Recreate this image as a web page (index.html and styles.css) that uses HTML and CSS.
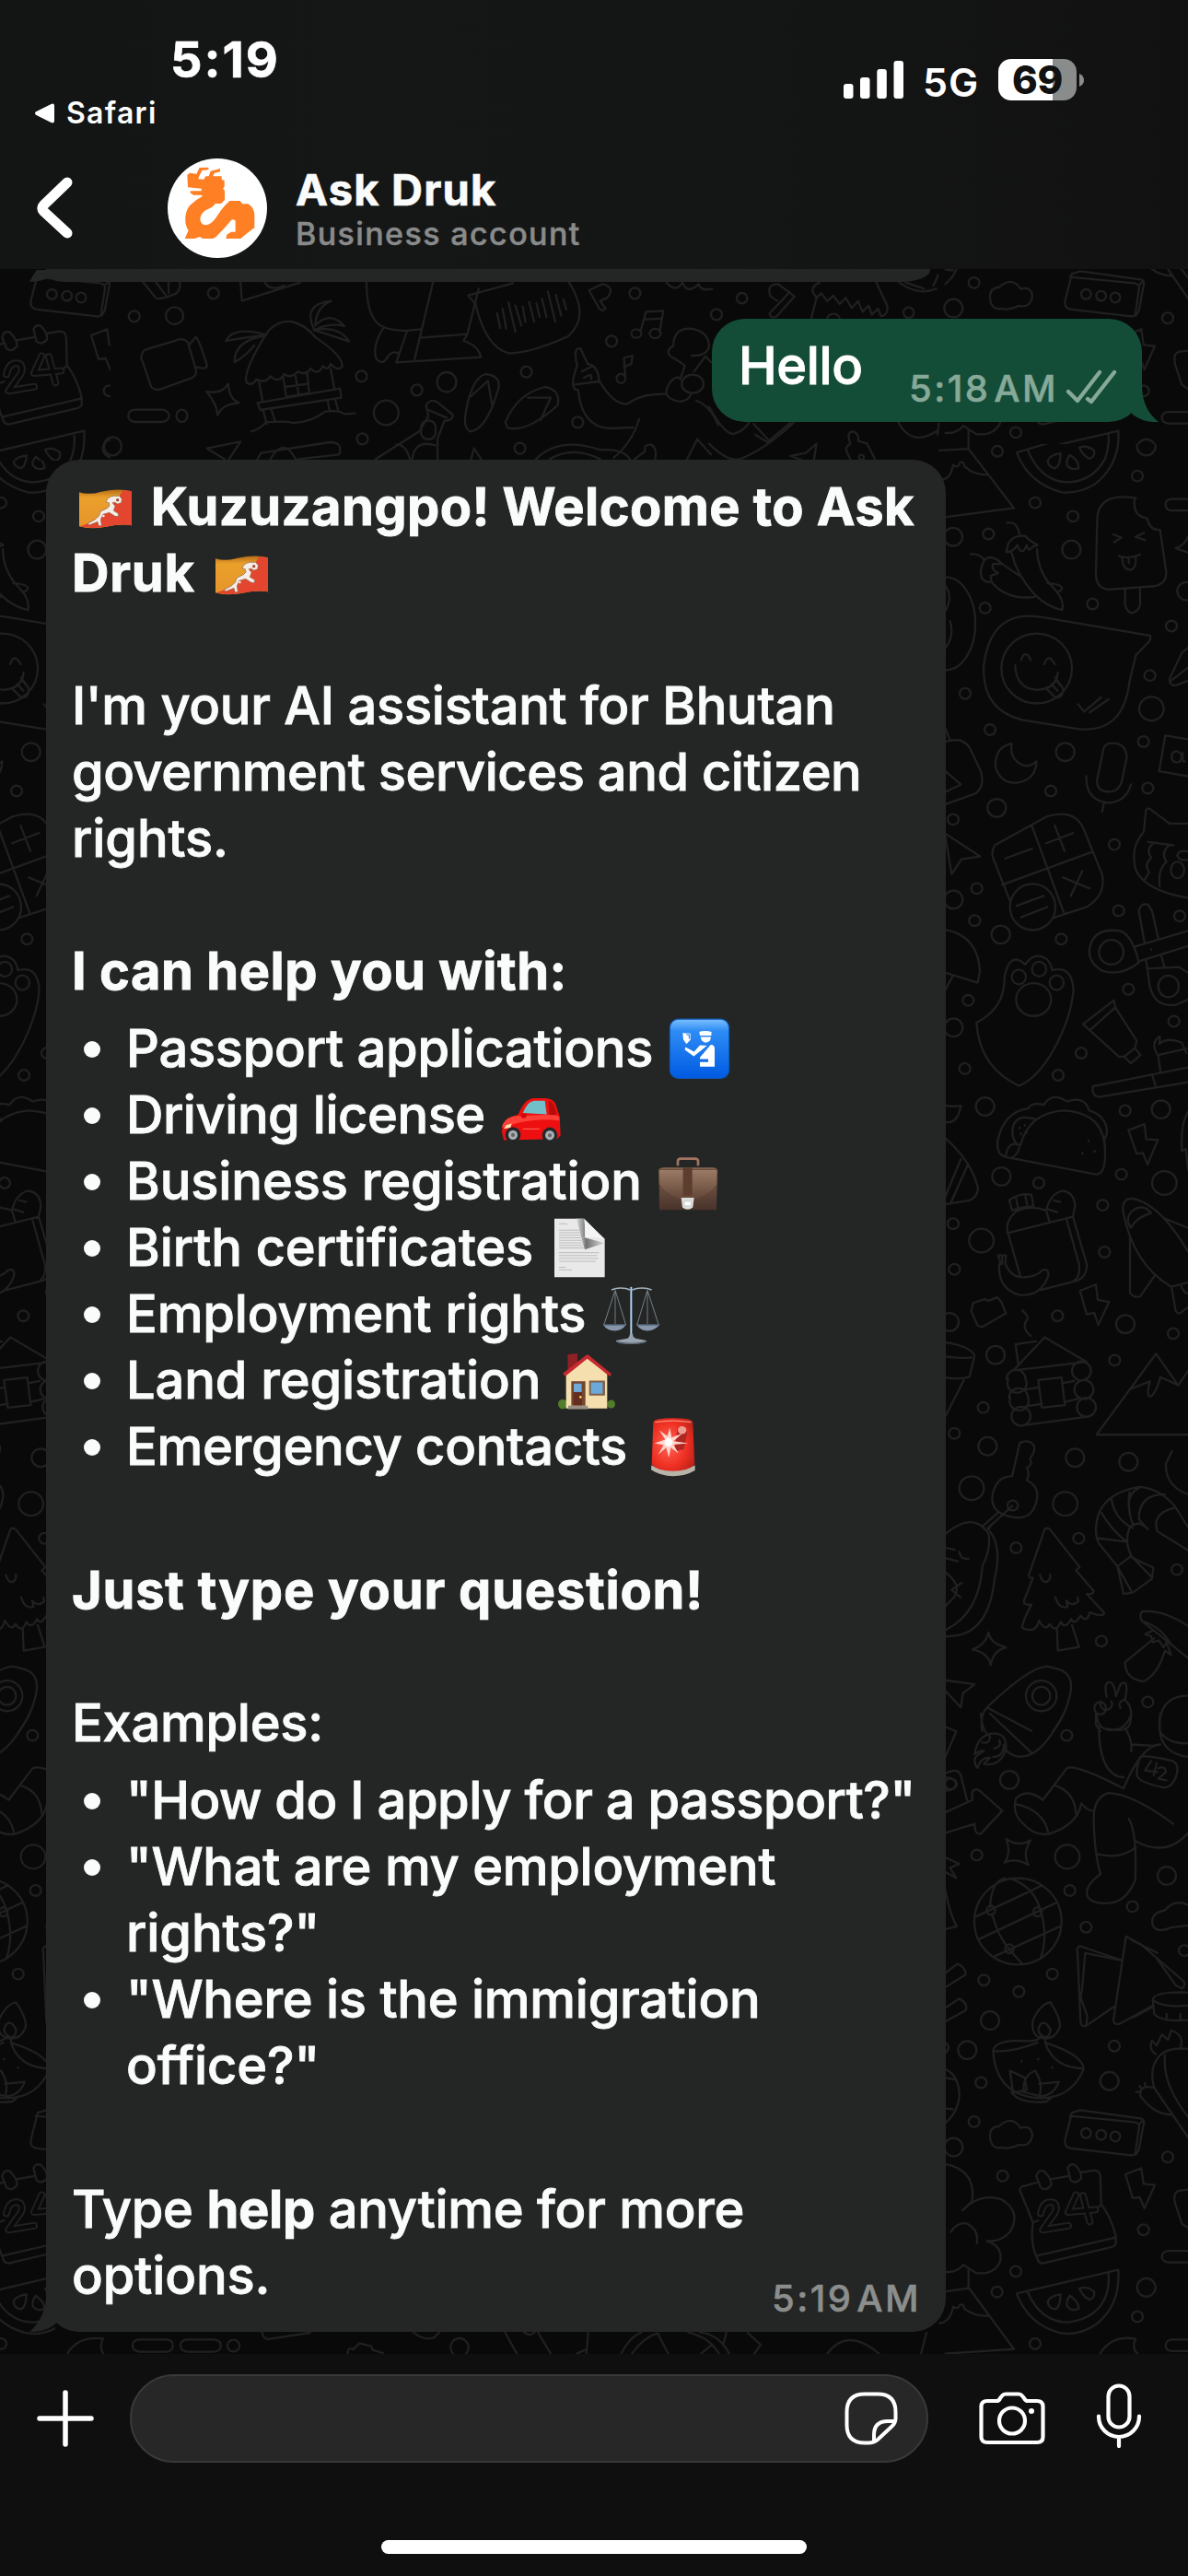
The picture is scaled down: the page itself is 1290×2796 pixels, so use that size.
FILE: index.html
```html
<!DOCTYPE html>
<html lang="en">
<head>
<meta charset="utf-8">
<title>Ask Druk</title>
<link rel="stylesheet" href="styles.css">
</head>
<body>
<div class="screen">
  <header class="header">
    <div class="status">
      <div class="status-left">
        <div class="clock">5:19</div>
        <div class="return-app">
          <svg width="23" height="22" viewBox="0 0 23 22"><path d="M2 9.300Q0 11 2 12.700L18.500 21Q22 22.500 22 19V3Q22-.5 18.500 1Z" fill="#fff"/></svg>
          <span>Safari</span>
        </div>
      </div>
      <div class="status-right">
        <svg width="65" height="41" viewBox="0 0 65 41" fill="#fff"><rect y="25" width="10.500" height="16" rx="3"/><rect x="18" y="18" width="10.500" height="23" rx="3"/><rect x="36.300" y="9" width="10.500" height="32" rx="3"/><rect x="54.500" width="10.500" height="41" rx="3"/></svg>
        <span class="network">5G</span>
        <div class="battery"><span class="battery-level">69</span></div>
        <svg class="battery-cap" width="5" height="14" viewBox="0 0 5 14"><path d="M0 0Q5 2 5 7T0 14Z" fill="#8a8b8b"/></svg>
      </div>
    </div>
    <div class="contact">
      <svg class="back" width="44" height="72" viewBox="0 0 44 72"><path d="M36 8L10.500 32.500Q7 36 10.500 39.500L36 63" fill="none" stroke="#fff" stroke-width="11" stroke-linecap="round" stroke-linejoin="round"/></svg>
      <svg class="avatar" width="108" height="108" viewBox="66 36 324 324"><circle cx="228" cy="198" r="162" fill="#fff"/><path d="M130 90L138 83L160 86L170 66L199 65V73L178 75L168 96L166 103L184 104L190 94H200L206 77L237 69V79L218 84L214 94H242V104L251 108V128L246 134L252 140V171L240 183H222L211 194L190 205Q174 215 172 233Q174 252 192 253Q208 250 222 231L240 205Q252 188 268 174H302L309 184H328Q348 196 349 220V262L329 276L304 297H256L259 284L273 275H287V240Q284 232 274 236L252 262L224 291L214 297H180L171 291L154 297H122L134 270Q122 254 124 226Q126 204 139 188L161 170L178 160V155H150L140 148V142H176V134L132 130Z" fill="#ff7f24"/></svg>
      <div class="contact-text">
        <div class="contact-name">Ask Druk</div>
        <div class="contact-kind">Business account</div>
      </div>
    </div>
  </header>

  <main class="chat">
    <svg class="wallpaper" width="1290" height="2263" viewBox="0 292 1290 2263">
      <defs>
        <ellipse id="s" rx="18" ry="13"/><ellipse id="m" rx="30" ry="22"/><ellipse id="l" rx="40" ry="29"/>
        <g id="tile">
          <g transform="translate(1020 480) scale(.33333 .44643)">
            <path d="M252 25L553 -42Q583 -30 583 0Q575 60 510 100Q460 125 400 122Q290 100 252 25M287 17Q330 97 420 97Q500 95 540 40Q556 10 548 -38M395 27Q360 30 353 45Q355 60 376 63Q394 60 395 27M425 31Q412 45 416 56Q430 70 454 63Q455 45 425 31M456 13Q480 6 504 20Q508 35 490 40Q470 35 456 13M0 20L95 16L243 160L0 184M0 90Q35 95 45 55Q60 65 67 50Q80 45 82 58Q110 80 158 79M95 16V-5"/>
            <path d="M220 196Q255 190 262 228M218 267L225 246Q240 225 280 228Q290 238 320 250L304 254Q290 270 284 250Q270 280 254 250Q240 268 218 267M236 270Q250 320 310 370Q350 400 400 408Q410 380 360 345Q320 310 318 260M102 272Q130 270 147 286Q130 310 137 328Q150 345 170 338L167 325L192 318Q168 310 174 296L205 296Q170 270 147 286M168 338Q220 385 310 376M205 296L262 325M352 343Q400 345 400 356Q390 368 378 361"/>
            <path d="M640 136Q510 120 514 196L510 320Q510 355 550 358L700 350Q740 345 739 315L719 213Q685 216 677 185Q630 180 636 140M567 224L593 232L569 243M667 220L639 230L670 238M585 277Q620 285 654 273M595 280Q598 312 625 310Q642 305 640 280M617 284V294M605 358V395Q612 415 630 415Q650 410 654 395V354M810 138H755Q735 140 737 154Q740 165 755 166H810M810 230Q800 250 770 258L810 268"/>
            <path d="M686 470L330 425Q170 405 145 540Q135 650 270 675L450 697Q600 710 620 580L640 518L684 484Q690 475 686 470M202 550A115 85 0 1 0 432 550A115 85 0 1 0 202 550M266 530Q280 500 298 530M342 540Q355 510 376 540M247 542Q250 600 320 602Q380 600 386 560M350 600L380 622Q405 620 402 598L378 572M365 588L385 604M380 578L400 595M452 637L472 655L527 620M490 657L551 625"/>
            <path d="M20 328A95 110 0 0 1 20 554M20 350Q45 375 20 410M35 435Q50 470 20 500M810 500L790 512L750 575Q748 595 775 590L810 580M755 580L810 548M236 733Q180 740 183 790Q200 830 250 828Q315 822 316 776Q280 800 245 770Q230 755 236 733M535 745L514 820Q510 850 555 850Q590 848 597 815L611 765Q605 732 570 732Q540 730 535 745M479 812Q475 870 550 877Q610 873 624 832M536 878L530 898M810 722L736 713L716 800L810 812M793 765Q775 742 757 758Q755 785 785 776L793 755Q790 780 800 776"/>
            <path d="M20 728Q80 715 100 745L135 800Q150 840 115 855L20 880M20 800L70 832L20 850M20 695L35 725M20 952L133 1007L72 1014L40 1050L20 960M180 980L350 910Q440 890 470 940L530 1050Q545 1100 480 1130L372 1156M180 980Q165 1000 180 1020L230 1115M300 930L405 1143M205 1076L498 996M215 1012L302 988M348 975L436 950M376 932L408 994M403 1058L490 1085M466 1042L428 1103M230 1130A74 56 0 1 0 378 1130A74 56 0 1 0 230 1130M252 1127L340 1103M266 1155L352 1130M666 947Q620 985 640 1040Q670 1090 810 1108M666 947L673 895Q680 885 692 895L750 927H810M680 972L762 980M700 973Q670 990 690 1010Q665 1030 684 1045L670 1062M748 980Q720 1000 740 1020Q710 1040 718 1080M754 1040A22 20 0 1 0 798 1040A22 20 0 1 0 754 1040M810 995Q780 990 775 1005Q785 1020 810 1015"/>
            <path d="M20 1185Q125 1200 132 1285L125 1314L20 1290M45 1296L20 1330M650 1265Q590 1300 530 1285Q475 1260 493 1220Q510 1180 590 1188Q630 1200 650 1265M520 1240A40 30 0 1 0 600 1240A40 30 0 1 0 520 1240M637 1226L810 1188M650 1262L810 1225M668 1215L650 1140Q655 1120 680 1124L693 1140L713 1206M673 1258L685 1320Q700 1375 770 1368L810 1355M678 1280L780 1276L810 1290M723 1248L733 1275M713 1323A33 26 0 1 0 780 1323A33 26 0 1 0 713 1323M690 1233V1234"/>
            <path d="M121 1411Q215 1375 212 1300Q230 1235 280 1270Q310 1235 352 1258Q365 1270 367 1284Q430 1270 437 1330Q430 1400 370 1480Q320 1545 260 1565Q130 1520 121 1411M250 1355A57 40 0 1 0 364 1355A57 40 0 1 0 250 1355M236 1300A23 18 0 1 0 282 1300A23 18 0 1 0 236 1300M302 1281A23 18 0 1 0 348 1281A23 18 0 1 0 302 1281M359 1314A23 18 0 1 0 405 1314A23 18 0 1 0 359 1314M468 1415L568 1357L573 1374L643 1455L637 1473L655 1490L624 1510L602 1494H585ZM490 1430L573 1374M602 1494L637 1473M500 1566L810 1520M713 1492L720 1528M713 1492Q685 1460 718 1445Q720 1455 716 1463Q745 1445 790 1460L805 1485M713 1490L805 1474M694 1540L705 1566"/>
            <use href="#s" x="189" y="22"/><use href="#s" x="645" y="82"/><use href="#s" x="312" y="147"/><use href="#s" x="435" y="180"/><use href="#s" x="160" y="223"/><use href="#m" x="45" y="230"/><use href="#m" x="430" y="261"/><use href="#m" x="674" y="10"/><use href="#s" x="149" y="403"/><use href="#s" x="499" y="393"/><use href="#s" x="756" y="447"/><use href="#m" x="805" y="362"/><use href="#s" x="686" y="567"/><use href="#l" x="691" y="648"/><use href="#s" x="84" y="611"/><use href="#s" x="165" y="699"/><use href="#s" x="665" y="728"/><use href="#m" x="410" y="753"/><use href="#s" x="363" y="848"/><use href="#s" x="679" y="841"/><use href="#m" x="187" y="889"/><use href="#s" x="45" y="917"/><use href="#s" x="570" y="978"/><use href="#m" x="46" y="1112"/><use href="#s" x="122" y="1085"/><use href="#s" x="584" y="1139"/><use href="#s" x="115" y="1163"/><use href="#m" x="200" y="1197"/><use href="#s" x="397" y="1208"/><use href="#s" x="783" y="1152"/><use href="#s" x="616" y="1330"/><use href="#s" x="94" y="1357"/><use href="#m" x="46" y="1423"/><use href="#s" x="764" y="1408"/><use href="#s" x="462" y="1485"/><use href="#s" x="83" y="1523"/><use href="#s" x="387" y="1539"/>
          </g>
          <g transform="translate(1020 1180) scale(.33333 .44643)">
            <path d="M810 -12L520 24Q495 20 500 0M20 45Q50 48 70 45Q60 90 20 85M20 124Q105 180 126 245Q125 268 95 276L20 285M70 175L20 265M92 190L38 280M217 170Q185 165 190 130Q210 60 290 52Q300 35 340 43Q370 10 415 35Q475 20 488 57Q545 70 546 110L540 125M217 170L510 212Q540 212 540 165Q545 60 400 57Q290 65 265 140M217 165Q225 130 262 140Q260 160 240 170M240 122Q230 80 275 73L312 77M240 122L252 140M262 98V100M278 92V94M266 113V115M284 110V112M486 130V132M466 160V162M506 155V157M616 105L668 90L674 127L712 128L678 188L663 160L643 162Z"/>
            <path d="M228 275Q265 255 300 262L307 290Q270 290 237 300ZM250 270L256 292M280 264L286 286M250 302Q215 325 222 350L263 458M250 302Q300 285 348 300L358 325M348 300Q360 260 400 252Q440 255 442 290L435 315M372 275L394 279M355 297L384 304M222 355L435 315L480 430Q482 460 450 470L330 493M415 323L455 430Q460 460 440 470M200 430L192 409H217L215 430Q235 465 280 462Q320 460 335 445Q360 440 354 460Q330 510 260 505Q190 490 195 430M205 430V412M104 545L110 525L150 515L158 520L188 511L202 522L217 550L140 583L125 580ZM458 495L510 480L516 517L553 522L518 578L505 549L480 552ZM598 300Q595 270 630 271Q720 285 810 400M598 300Q630 430 755 485L810 475M623 342Q600 315 637 296Q670 285 690 306Q645 315 623 342M730 318L810 342M621 365V500Q635 515 655 508L700 460M757 488L770 545Q780 555 792 545L810 535M785 480Q800 505 810 500M810 60Q785 90 790 155L803 150L810 200"/>
            <path d="M270 543Q298 560 280 572Q272 590 298 605M257 672L248 625L315 618M242 688L343 608L480 668L250 688M225 710A31 23 0 1 0 281 710A31 23 0 1 0 219 710M231 755A31 23 0 1 0 289 755A31 23 0 1 0 227 755M235 800A31 23 0 1 0 297 800A31 23 0 1 0 235 800M432 690A31 23 0 1 0 494 690A31 23 0 1 0 432 690M440 735A31 23 0 1 0 502 735A31 23 0 1 0 440 735M448 778A31 23 0 1 0 510 778A31 23 0 1 0 448 778M322 712L398 706L409 773L334 779ZM282 735L322 730M282 776L334 770M400 720L438 714M410 765L450 758M276 822L484 801M20 620Q100 630 115 652L98 705Q60 712 20 706M20 655Q60 660 105 657M80 712L20 800M810 845H512L706 648L778 725L810 690M626 733L686 715Q672 755 690 752Q708 740 720 705L757 717L778 725M810 990Q735 970 738 915L758 885"/>
            <path d="M237 946L262 865Q290 855 307 870Q315 885 295 903Q305 920 285 925Q295 940 285 956Q325 970 318 1000Q305 1060 225 1043Q160 1030 175 985Q190 945 237 946M222 1017A17 12 0 1 0 256 1017A17 12 0 1 0 222 1017M238 1018L158 1072M190 1035L140 1068Q155 1085 165 1070M20 1086Q110 1030 160 1085Q170 1120 140 1165Q130 1280 20 1320M165 1080Q205 1120 180 1195Q160 1340 20 1335M65 1130Q70 1150 95 1146M20 1120L50 1125M20 1145L60 1153M20 1180Q75 1210 48 1240L20 1262M73 1205L40 1222L70 1241M343 1075Q350 1070 360 1075L457 1167L445 1175L503 1225Q500 1235 480 1232L537 1278Q535 1290 490 1277Q480 1305 460 1285Q440 1310 430 1293Q410 1320 395 1300Q380 1330 360 1305Q345 1325 325 1297Q315 1330 270 1315Q270 1300 300 1258Q275 1260 275 1250L305 1193Q290 1195 292 1185ZM328 1186Q335 1205 350 1203Q365 1195 360 1185M378 1240Q390 1270 418 1263L414 1248Q430 1265 453 1250L450 1240M383 1316L386 1370L455 1361L432 1308M160 1326Q165 1352 217 1362Q175 1370 167 1405Q160 1375 108 1367Q152 1355 160 1326M20 1442L115 1452L77 1473L70 1508L20 1468"/>
            <path d="M810 1126L710 1080Q690 1035 770 1022L810 1070M770 1022Q720 975 650 972Q550 985 520 1035Q500 1080 520 1110L580 1165L600 1232L630 1229L693 1195L697 1168L630 1145Q600 1110 620 1070Q650 1050 680 1075M520 1097L608 1105M528 1035Q565 1080 608 1103M560 1000Q570 1050 630 1072M620 985Q610 1030 632 1065M650 975Q605 990 622 1040M735 990Q650 990 650 1050Q660 1060 680 1075M625 1140L580 1165M625 1140L693 1192M580 1165L625 1225M810 1310Q730 1270 660 1275Q650 1285 660 1298L810 1388M660 1298Q720 1310 755 1355M700 1340L605 1398Q605 1440 665 1445Q710 1430 735 1370L755 1380L740 1350L730 1362L715 1345L695 1350L690 1335L670 1330L698 1320M300 1565L155 1508M155 1508Q130 1530 140 1566M155 1508Q320 1390 370 1412Q445 1420 425 1480Q410 1530 370 1566M282 1480A50 37 0 1 0 382 1480A50 37 0 1 0 282 1480M303 1480A29 22 0 1 0 361 1480A29 22 0 1 0 303 1480M545 1482Q535 1450 552 1447Q570 1445 575 1481L590 1452Q610 1440 610 1465L605 1490Q635 1510 620 1550Q610 1570 545 1560M505 1510A19 15 0 1 0 543 1510A19 15 0 1 0 505 1510M527 1493A19 14 0 1 0 560 1493M590 1510Q580 1495 600 1490M510 1520V1550L525 1566M718 1566Q710 1480 810 1480"/>
            <use href="#m" x="149" y="47"/><use href="#s" x="605" y="57"/><use href="#m" x="722" y="54"/><use href="#m" x="202" y="217"/><use href="#s" x="324" y="233"/><use href="#s" x="593" y="212"/><use href="#l" x="733" y="233"/><use href="#s" x="532" y="287"/><use href="#s" x="45" y="332"/><use href="#l" x="137" y="373"/><use href="#s" x="538" y="401"/><use href="#s" x="49" y="443"/><use href="#m" x="33" y="571"/><use href="#s" x="385" y="556"/><use href="#m" x="606" y="576"/><use href="#s" x="762" y="599"/><use href="#m" x="183" y="651"/><use href="#s" x="571" y="664"/><use href="#s" x="143" y="779"/><use href="#s" x="49" y="842"/><use href="#m" x="157" y="873"/><use href="#m" x="442" y="901"/><use href="#m" x="616" y="911"/><use href="#l" x="105" y="975"/><use href="#l" x="410" y="1013"/><use href="#s" x="454" y="1097"/><use href="#s" x="250" y="1120"/><use href="#s" x="774" y="1173"/><use href="#s" x="528" y="1347"/><use href="#s" x="679" y="1495"/>
          </g>
          <g transform="translate(1020 1860) scale(.33333 .44643)">
            <path d="M135 0Q140 45 165 55M165 0L300 95M405 0Q350 80 300 98Q255 115 215 88M178 48Q225 50 216 90Q195 130 145 122L165 107Q135 105 125 132Q110 120 118 105L145 90Q130 90 115 98Q125 50 178 48M165 55Q165 75 140 70M178 85Q205 80 195 65M175 105Q210 105 210 75M20 32L55 43L20 105M20 145Q60 130 70 150L90 210M20 155A35 15 0 0 1 20 187M20 240L107 210V190Q118 180 130 187L205 236L135 292Q115 295 115 268L20 290M512 0Q515 40 560 40Q610 40 625 0M520 32Q520 150 600 155M605 35Q630 65 625 92M600 182Q660 75 720 75M600 182Q440 120 415 133L337 210Q290 180 250 205Q235 240 270 265Q310 300 360 292Q450 270 463 218Q480 235 500 236M250 220Q340 235 355 290M378 175Q440 190 445 242M625 75L700 78M655 105Q680 100 760 115Q785 125 770 155Q755 185 720 178Q640 165 643 145Q645 120 655 105M720 0Q700 95 810 105M720 45Q750 75 810 72M762 268Q630 195 550 193Q500 205 503 260Q505 340 525 390Q470 420 483 445Q500 465 560 460Q610 455 638 405Q645 290 617 255M517 342Q590 355 640 325M640 310Q740 350 810 290M690 115L670 138L710 142M708 120L698 150M713 133Q735 125 738 142L713 158L740 162M218 305Q260 325 297 308Q270 340 290 368Q250 350 212 362Q235 340 218 305M20 350L65 365L35 375L55 400L20 385M20 430Q35 490 57 517L20 524"/>
            <path d="M114 505A142 105 0 1 0 398 505A142 105 0 1 0 114 505M120 493L280 437L335 417M130 548L380 460M180 590L397 516M165 470Q170 405 215 400M230 400Q310 420 330 480Q355 540 330 595M172 487Q190 540 230 575L270 608M154 478A14 11 0 1 0 182 478A14 11 0 1 0 154 478M306 482A14 11 0 1 0 334 482A14 11 0 1 0 306 482M214 572A14 11 0 1 0 242 572A14 11 0 1 0 214 572M810 465Q765 450 735 478Q685 485 695 515Q710 535 755 520L810 515M595 600L458 565Q445 570 450 580L460 750Q465 765 480 758L568 713M595 600L475 582L465 670L460 690L482 735L478 758M608 542L567 745Q570 760 590 753L695 710M608 542L655 560L795 650Q805 660 790 668L770 660L708 595M625 550L710 582M632 738L690 715M810 678Q700 675 695 695L700 730Q720 750 810 745M695 695Q720 715 810 710M740 730V745M785 730V745M20 630L60 608Q90 620 85 635L20 665M20 715L65 693Q95 705 85 722L20 748M20 865Q65 880 65 930Q60 970 20 995M20 885L52 890M20 960L45 962M20 800Q40 810 20 825"/>
            <path d="M342 790Q295 785 305 745Q330 705 362 702Q395 740 393 760Q380 790 342 790M345 787Q310 775 330 755Q345 745 362 768Q360 785 345 787M175 820Q180 795 260 795Q320 800 332 785L345 788V800Q470 830 470 865Q430 935 330 935Q185 930 175 820M175 820Q230 825 320 800M345 800Q370 860 468 863M268 845V846M322 840V841M368 860V861M230 868L278 885L285 915L240 922ZM275 920Q270 880 312 868Q340 900 325 930ZM325 900L390 895Q370 930 330 930M235 920Q260 950 350 943L370 930M165 1025Q165 1005 195 1003Q235 975 265 1007Q300 1000 303 1025Q295 1055 260 1048Q220 1060 205 1055Q165 1060 165 1025M432 970L410 1035Q405 1055 430 1057L625 1074Q640 1075 640 1060L650 1010Q655 995 635 993L425 978M432 970L460 964L660 985Q670 990 665 1000L650 1060L640 1072M650 998L665 988M462 1020A16 12 0 1 0 494 1020A16 12 0 1 0 462 1020M511 1024A16 12 0 1 0 543 1024A16 12 0 1 0 511 1024M557 1028A16 12 0 1 0 589 1028A16 12 0 1 0 557 1028M705 828Q680 815 693 795L708 807L725 780L745 793L755 770Q800 780 785 815M700 910Q680 860 720 830Q750 810 810 815M735 830Q725 900 810 980M700 910L810 1030M700 910Q650 900 655 930Q700 975 755 975M640 920H655M652 905L660 912M670 898V905"/>
            <path d="M305 1237L263 1160Q260 1150 280 1148L317 1140M362 1132L418 1125M462 1115L505 1110Q525 1110 525 1130L527 1192Q560 1225 575 1270V1290Q570 1295 560 1297L340 1336Q322 1338 318 1322Q295 1290 305 1237M318 1318L560 1276Q572 1275 575 1270M305 1237L322 1232M490 1212L527 1195M316 1125Q320 1108 340 1112Q365 1130 365 1145Q350 1163 330 1152ZM418 1105Q425 1093 442 1097Q465 1115 462 1130Q445 1145 428 1135Z"/>
            <path class="digits-outer" d="M330 1215Q340 1180 375 1190Q390 1205 365 1225L337 1255L420 1245M445 1170L420 1212L508 1206M468 1172L490 1235"/>
            <path class="digits-inner" d="M330 1215Q340 1180 375 1190Q390 1205 365 1225L337 1255L420 1245M445 1170L420 1212L508 1206M468 1172L490 1235"/>
            <path d="M606 1120L658 1105L665 1143L702 1146L668 1203L653 1176L630 1178ZM20 1095Q120 1110 107 1185L75 1208Q130 1165 200 1180Q270 1210 230 1260Q200 1285 155 1282Q210 1295 197 1335Q175 1365 120 1360L78 1340Q55 1360 20 1357M37 1260Q60 1235 90 1240Q130 1255 122 1288M95 1350V1395L243 1545L20 1556M20 1405L95 1397M0 1482Q35 1480 45 1442Q60 1450 67 1437Q80 1435 82 1447Q110 1465 158 1464M252 1410L583 1352Q590 1440 510 1485Q450 1515 390 1505Q290 1485 252 1410M287 1405Q330 1480 420 1480Q520 1470 545 1410Q555 1385 550 1358M395 1412Q360 1415 353 1430Q355 1445 376 1448Q394 1445 395 1412M425 1415Q412 1430 416 1440Q430 1455 454 1447Q455 1430 425 1415M456 1398Q480 1390 504 1405Q508 1420 490 1425Q470 1420 456 1398M524 1556Q560 1510 640 1520Q625 1540 645 1556M810 1157L780 1160Q760 1165 768 1190L790 1240L810 1250M810 1306H745Q725 1308 725 1320T745 1334H810M810 1522H755Q737 1525 737 1536T755 1550H810"/>
            <use href="#s" x="415" y="53"/><use href="#m" x="228" y="161"/><use href="#s" x="36" y="171"/><use href="#s" x="122" y="344"/><use href="#l" x="417" y="348"/><use href="#m" x="741" y="394"/><use href="#s" x="425" y="430"/><use href="#s" x="629" y="469"/><use href="#s" x="478" y="519"/><use href="#s" x="798" y="576"/><use href="#s" x="368" y="633"/><use href="#s" x="145" y="648"/><use href="#s" x="259" y="676"/><use href="#m" x="165" y="746"/><use href="#m" x="91" y="818"/><use href="#s" x="570" y="808"/><use href="#m" x="554" y="893"/><use href="#s" x="136" y="897"/><use href="#s" x="113" y="992"/><use href="#m" x="46" y="1054"/><use href="#s" x="744" y="1078"/><use href="#s" x="206" y="1124"/><use href="#s" x="665" y="1255"/><use href="#s" x="249" y="1356"/><use href="#s" x="188" y="1406"/><use href="#m" x="674" y="1395"/><use href="#s" x="645" y="1466"/><use href="#s" x="312" y="1532"/>
          </g>
        </g>
        <clipPath id="left-top"><rect x="0" y="292" width="120" height="208"/></clipPath>
        <clipPath id="right-top"><rect x="1018" y="292" width="272" height="190"/></clipPath>
        <clipPath id="main-part"><rect x="1018" y="482" width="272" height="2073"/></clipPath>
        <clipPath id="main-left"><rect x="0" y="500" width="60" height="2055"/></clipPath>
      </defs>
      <g class="doodles">
        <g clip-path="url(#main-part)"><use href="#tile"/></g>
        <g clip-path="url(#main-left)"><use href="#tile" x="-1123"/></g>
        <g clip-path="url(#right-top)"><use href="#tile" y="-1996"/></g>
        <g clip-path="url(#left-top)"><use href="#tile" x="-1123" y="-1996"/></g>
        <g transform="translate(0 280) scale(.49745 .33333)">
          <path d="M312 78L340 130Q350 138 385 115Q395 100 392 78M340 78L362 122M368 78V115M525 78L528 140L655 80M578 80Q590 110 620 90M310 315Q305 325 312 340L330 420Q340 435 355 425L420 390Q430 380 428 365L410 275Q400 258 385 268L325 295Q310 300 310 315M412 285L427 257Q433 260 452 350Q450 365 430 355M498 410Q500 460 522 472Q485 475 475 512Q475 480 451 435Q485 445 498 410M280 515Q280 495 295 494H355Q370 500 369 515T355 534H295Q280 530 280 515"/>
          <path d="M580 250Q600 205 635 207Q665 215 690 260Q750 320 747 355Q735 370 722 345Q715 370 705 352Q695 385 678 360Q668 385 650 370Q635 395 620 378Q610 410 590 385Q580 410 560 395Q550 420 538 405Q530 370 580 250M493 270Q510 220 582 250Q530 260 493 270M580 252Q510 270 512 340Q535 320 555 285M685 230Q660 150 723 140Q690 160 688 220Q720 170 752 222Q720 210 685 235Q740 220 762 272Q720 250 685 235M565 400L573 465M722 362L730 425M618 388L625 452L675 440L670 370M645 385L652 445M622 420L672 410M562 472L742 425L745 455L568 495ZM575 498L582 540M592 492L600 530M715 465L720 500M732 462L738 495M549 565Q570 555 580 535Q620 530 640 537Q680 535 710 500Q740 495 752 508L775 506"/>
          <path d="M800 78Q800 190 830 220Q860 245 918 232M945 80L905 330M838 225Q810 290 822 330Q835 350 845 325Q855 300 868 310M888 240L865 340L1050 323Q1045 285 1012 270L1020 248L918 260M1020 248L1045 100M1120 82L1022 122L1038 150Q1060 290 1110 310Q1160 310 1240 255Q1290 190 1242 80M1085 180L1092 228M1097 165L1105 230M1110 145L1125 240M1125 155L1138 220M1141 158L1147 208M1155 143L1166 207M1171 148L1178 192M1183 133L1193 193M1196 110L1212 207M1213 120L1225 188M1230 135L1236 168M1286 105L1315 85Q1345 95 1325 130L1310 140L1322 165Q1315 175 1308 165ZM1455 80Q1475 115 1490 80Q1500 120 1525 85Q1530 110 1555 100M1398 240L1410 175L1448 172L1440 240M1408 200L1445 197M1378 246A11 14 0 1 0 1400 246A11 14 0 1 0 1378 246M1418 246A11 14 0 1 0 1442 246A11 14 0 1 0 1418 246"/>
          <path d="M1017 500Q1030 390 1060 378Q1100 385 1085 440Q1060 560 1027 565Q1010 555 1017 500M1028 450L1065 400L1075 485M1103 535Q1130 440 1190 420Q1225 430 1217 480Q1150 570 1108 553ZM1152 455H1202L1180 528M1267 295Q1250 290 1260 350Q1240 430 1262 430Q1270 550 1330 555L1382 552M1267 295L1283 345Q1305 350 1308 400Q1340 480 1370 475Q1400 440 1455 443M1255 412L1308 402M1270 370L1290 355M1275 390Q1295 370 1290 395M1395 525Q1380 600 1340 650M1365 390A9 14 0 1 1 1346 395A9 14 0 1 1 1365 390L1362 325L1381 318L1378 345L1362 355M1475 330Q1445 310 1470 285Q1470 230 1505 230Q1545 235 1548 285Q1545 320 1510 318M1475 330L1495 350L1485 395Q1480 380 1465 400Q1440 450 1475 465Q1500 475 1510 440M1488 410A24 30 0 1 0 1536 410A24 30 0 1 0 1488 410M1515 370L1540 320L1552 340M1520 465Q1550 480 1568 545"/>
          <path d="M820 655L915 565L935 515L930 480Q940 455 955 470L988 510Q990 530 970 530L955 590V655M935 495L975 520M920 560A16 23 0 1 0 950 560A16 23 0 1 0 920 560M865 608Q885 605 895 655M900 655Q905 590 950 610M452 620L525 598L500 655M452 620L490 655M562 655L570 635L720 600Q750 600 740 640L650 655M590 655Q620 580 645 655M1028 655L1035 620L1050 655M1170 655Q1220 580 1310 625Q1360 620 1375 655M1200 655Q1250 610 1310 655M1385 655L1408 630Q1405 605 1422 608Q1435 620 1430 655M1500 655L1522 590L1552 640"/>
          <g><ellipse cx="293" cy="190" rx="12" ry="18"/><ellipse cx="381" cy="188" rx="19" ry="28"/><ellipse cx="466" cy="115" rx="12" ry="18"/><ellipse cx="397" cy="514" rx="12" ry="20"/><ellipse cx="246" cy="613" rx="19" ry="30"/><ellipse cx="789" cy="385" rx="12" ry="18"/><ellipse cx="910" cy="430" rx="12" ry="18"/><ellipse cx="975" cy="404" rx="21" ry="32"/><ellipse cx="843" cy="504" rx="27" ry="40"/><ellipse cx="791" cy="589" rx="12" ry="18"/><ellipse cx="1149" cy="371" rx="12" ry="18"/><ellipse cx="1335" cy="271" rx="12" ry="18"/><ellipse cx="1386" cy="115" rx="12" ry="18"/><ellipse cx="1261" cy="535" rx="12" ry="18"/><ellipse cx="1135" cy="620" rx="12" ry="18"/></g>
        </g>
        <g transform="translate(770 285) scale(.33333)">
          <path d="M200 110Q185 70 225 70L278 110L220 175Q200 185 197 165L245 115L262 95M200 110L222 125M360 65Q335 75 337 95L350 115L365 100L385 125L405 108L425 135L445 115L465 148L485 125L500 160L520 140L530 170L550 150L560 175Q585 170 580 140L545 65M350 115L333 180M385 180A22 22 0 0 1 425 180M620 65Q680 110 740 85M640 65L700 85M730 75Q740 60 745 40"/>
          <path d="M0 470Q50 560 80 558Q110 550 130 522M0 590Q60 650 100 640Q180 610 275 522M145 525L195 580L265 522M150 560L190 585M265 630L315 620L350 590L340 650M265 630L300 642M460 590Q445 550 470 550Q490 560 485 580L515 590L540 640M460 590Q440 600 450 620L460 640M617 522Q660 600 740 550M748 525L744 560"/>
          <circle cx="107" cy="116" r="17"/><circle cx="24" cy="169" r="18"/><circle cx="650" cy="163" r="17"/><circle cx="496" cy="634" r="8"/>
        </g>
        <g transform="translate(0 2480) scale(.5102 .33333)">
          <path d="M282 198Q282 178 298 178H355Q368 180 368 198T355 218H298Q282 215 282 198M384 198Q384 178 400 178H455Q470 180 470 198T455 218H400Q384 215 384 198M558 155Q560 180 575 176L660 156M880 155Q905 185 925 170L935 155M740 225Q740 200 752 210L765 190L790 200L793 212L815 222M1075 155L1100 224M1145 155L1172 224M1115 155L1127 163L1138 155M1252 155L1248 224M1228 224L1245 212M1322 224Q1340 170 1365 155M1345 224Q1370 170 1400 158L1422 224M1465 155Q1510 170 1530 224M1490 155Q1530 160 1552 224M1492 224L1515 195M1540 190L1546 155M143 225Q165 165 220 175Q210 200 220 225"/>
          <ellipse cx="978" cy="204" rx="19" ry="30"/><ellipse cx="497" cy="198" rx="13" ry="19"/>
        </g>
        <path d="M898 2555Q920 2525 955 2555M1000 2555L1006 2532M812 2532L826 2545L819 2555"/>
      </g>
    </svg>

    <div class="bubble earlier"><svg class="tail-left small" width="40" height="13" viewBox="0 0 40 13"><path d="M8 0Q2 8 0 13Q16 13 25 5Q28 9 40 13V0Z" fill="#242625"/></svg></div>

    <div class="bubble sent">
      <span class="sent-text">Hello</span>
      <span class="sent-meta"><span class="sent-time">5:18<i></i>AM</span>
        <svg width="56" height="38" viewBox="0 0 56 38"><path d="M3 24L13 34L37 3M24 32L28 35L53 3" fill="none" stroke="#86a998" stroke-width="4.300" stroke-linecap="round" stroke-linejoin="round"/></svg>
      </span>
      <svg class="tail-right" width="30" height="50" viewBox="0 0 30 50"><path d="M0 0H12V10Q12 36 30 50Q14 51 2 42L-6 30Z" fill="#144d37"/></svg>
    </div>

    <div class="bubble received">
      <svg class="tail-left" width="34" height="56" viewBox="0 0 34 56"><path d="M18 0V20Q16 42 0 56Q18 57 30 46L34 30V0Z" fill="#242625"/></svg>
      <p class="bold"><svg class="emoji flag" viewBox="9 -6 216 216"><use href="#flag"/></svg><span class="t-title"> Kuzuzangpo! Welcome to Ask</span><br><span class="t-druk">Druk </span><svg class="emoji flag" viewBox="9 -6 216 216"><use href="#flag"/></svg></p>
      <p class="gap"><span class="t-tight">I'm your AI assistant for Bhutan</span><br><span class="t-tighter">government services and citizen</span><br>rights.</p>
      <p class="bold gap"><span class="t-help">I can help you with:</span></p>
      <ul>
        <li><span class="t-tight">Passport applications</span><svg class="emoji" viewBox="486 32 216 209" preserveAspectRatio="none"><rect x="499" y="44" width="193" height="187" rx="28" fill="url(#blue)" stroke="#0f58b8" stroke-width="3"/><path d="M595 84Q615 78 635 84L634 96H597ZM599 100H633L630 112Q616 124 603 112ZM541 88L566 89V110L553 123L543 108ZM550 132L578 147L597 126L620 128L577 161L548 141ZM597 165L632 125Q645 124 645 138V194H597V179H624V170H597Z" fill="#fff"/><path d="M553 93H562V106" fill="none" stroke="#1675ea" stroke-width="3"/></svg></li>
        <li><span class="t-tighter">Driving license</span><svg class="emoji" viewBox="-60 241 216 209" preserveAspectRatio="none"><path d="M-42 425L-48 400Q-48 370-25 355L5 345Q25 295 55 293H95Q122 294 128 316L140 350L143 410L132 422Z" fill="#ee1010"/><path d="M-48 386Q-45 360-10 350L125 345L139 352V364Q60 352-30 380Z" fill="#ff4038"/><path d="M20 340Q35 302 58 301H92L98 344Z" fill="#72bfc9"/><path d="M104 302Q120 304 126 328L130 346H106Z" fill="#b90b0c"/><path d="M-34 378L-16 373L-20 386L-42 390Z" fill="#ffe3b4"/><rect x="14" y="341" width="18" height="15" rx="6" fill="#cc0b0b"/><circle cx="-12" cy="409" r="25" fill="#24272a"/><circle cx="-12" cy="409" r="15" fill="#a9aeb1"/><circle cx="-12" cy="409" r="6" fill="#606568"/><circle cx="108" cy="410" r="25" fill="#24272a"/><circle cx="108" cy="410" r="15" fill="#a9aeb1"/><circle cx="108" cy="410" r="6" fill="#606568"/><path d="M20 390H75" stroke="#ff6a5d" stroke-width="3"/></svg></li>
        <li>Business registration<svg class="emoji" viewBox="446 450 216 209" preserveAspectRatio="none"><path d="M521 506V491Q521 484 532 484H576Q587 484 587 491V506" fill="none" stroke="#a37462" stroke-width="8"/><path d="M460 517Q465 512 475 512H635Q645 512 650 518L647 645H461Z" fill="url(#leather)"/><path d="M459 518L650 518L649 565Q620 610 552 615Q490 610 460 565Z" fill="url(#flap)" stroke="#573e30" stroke-width="2"/><path d="M538 512H568V600H538Z" fill="#5d3e2e"/><path d="M532 607H574L570 637Q553 650 536 637Z" fill="#ddd"/><rect x="542" y="618" width="22" height="14" rx="4" fill="#fff" stroke="#999"/></svg></li>
        <li>Birth certificates<svg class="emoji" viewBox="96 659 216 209" preserveAspectRatio="none"><path d="M123 673H218L287 737V857H123Z" fill="#e9e9e9"/><path d="M195 673H222V732L287 750L222 770Z" fill="url(#fold)"/><path d="M138 689H165M138 709H214M138 717H214M138 725H214M138 733H220M138 741H220M138 749H222M138 757H220M138 765H222M138 780H268M138 789H262M138 798H266M138 807H258M138 826H160M138 834H180" stroke="#b4b4b4" stroke-width="2.500"/><path d="M220 673Q224 712 224 732Q260 728 287 738Z" fill="#f4f4f4"/></svg></li>
        <li>Employment rights<svg class="emoji" viewBox="273 868 216 209" preserveAspectRatio="none"><path d="M315 897Q345 885 379 898Q415 885 446 897" fill="none" stroke="#a2b3bf" stroke-width="5"/><path d="M327 898L290 1008M327 898L362 1008M327 898V1005M432 898L398 1008M432 898L469 1008M432 898V1005" fill="none" stroke="#717a80" stroke-width="3"/><rect x="375" y="888" width="8" height="160" fill="url(#metal)"/><path d="M287 1006H363Q350 1026 325 1026T287 1006M396 1006H473Q455 1026 432 1026T396 1006" fill="#8695a8"/><path d="M291 1007H359M400 1007H469" stroke="#405368" stroke-width="4"/><path d="M367 1050Q374 1047 375 1035H384Q385 1048 394 1050L428 1057Q430 1068 379 1068T330 1057Z" fill="#98a3ae"/><path d="M330 1060Q380 1072 430 1060" fill="none" stroke="#4a5462" stroke-width="3"/></svg></li>
        <li>Land registration<svg class="emoji" viewBox="124 1077 216 209" preserveAspectRatio="none"><path d="M170 1100L202 1097V1140L171 1152Z" fill="#8f2024"/><circle cx="154" cy="1257" r="15" fill="#537d2a"/><circle cx="312" cy="1257" r="13" fill="#537d2a"/><path d="M165 1165L234 1105L299 1163V1271H165Z" fill="#f5dfae"/><path d="M155 1160L230 1103Q234 1099 239 1103L313 1162L308 1170L234 1114L162 1170Z" fill="#c8292f"/><rect x="182" y="1185" width="46" height="77" fill="#75452e"/><rect x="189" y="1191" width="28" height="70" fill="#642d21"/><rect x="190" y="1192" width="26" height="27" fill="#6fabd8"/><rect x="240" y="1183" width="52" height="47" rx="2" fill="#80634b"/><rect x="246" y="1189" width="38" height="35" fill="#6ca9d9"/><circle cx="212" cy="1235" r="4" fill="#ffd94f"/><path d="M172 1262H236V1273H172Z" fill="#989084"/></svg></li>
        <li><span class="t-tight">Emergency contacts</span><svg class="emoji" viewBox="403 1286 216 209" preserveAspectRatio="none"><path d="M440 1450Q510 1480 582 1450V1466Q550 1484 510 1484T439 1464Z" fill="#b7b5aa"/><path d="M446 1314Q447 1301 511 1301T575 1314L581 1448Q560 1468 510 1468T441 1448Z" fill="url(#siren)"/><path d="M525 1330L552 1328L556 1352L545 1400L515 1406Z" fill="#ae2723"/><ellipse cx="540" cy="1339" rx="14" ry="12" fill="#ef9c91"/><path d="M450 1380L485 1369L466 1340L492 1358L500 1332L506 1362L540 1350L512 1374L560 1380L512 1385L528 1412L503 1394L497 1425L488 1394L462 1416L480 1386Z" fill="#ffd5cc"/><circle cx="496" cy="1377" r="13" fill="#fff"/><path d="M452 1314Q510 1305 569 1314" fill="none" stroke="#ff8c7b" stroke-width="4"/></svg></li>
      </ul>
      <p class="bold gap"><span class="t-just">Just type your question!</span></p>
      <p class="gap"><span class="t-tight">Examples:</span></p>
      <ul>
        <li><span class="t-tighter">"How do I apply for a passport?"</span></li>
        <li><span class="t-tight">"What are my employment</span><br>rights?"</li>
        <li><span class="t-tight">"Where is the immigration</span><br>office?"</li>
      </ul>
      <p class="gap"><span class="t-tight">Type <b>help</b> anytime for more</span></p>
      <div class="last-line"><span>options.</span><span class="received-time">5:19<i></i>AM</span></div>
    </div>
  </main>

  <footer class="composer">
    <div class="composer-row">
      <svg class="plus" width="62" height="62" viewBox="0 0 62 62"><path d="M31 3V59M3 31H59" stroke="#fff" stroke-width="5.500" stroke-linecap="round"/></svg>
      <div class="input">
        <svg width="58" height="58" viewBox="0 0 58 58" fill="none" stroke="#fff" stroke-width="4" stroke-linejoin="round" stroke-linecap="round"><path d="M22 2.500H36Q55.500 2.500 55.500 22V29Q55.500 34 51 38L36 52Q32 55.500 26 55.500H22Q2.500 55.500 2.500 36V22Q2.500 2.500 22 2.500ZM55 32H47Q32 32 32 47V54"/></svg>
      </div>
      <svg class="camera" width="72" height="58" viewBox="0 0 72 58" fill="none" stroke="#fff" stroke-width="4.200" stroke-linejoin="round"><path d="M9 10H19Q22 10 23 7L25 4.500Q26.500 2.500 29 2.500H43Q45.500 2.500 47 4.500L49 7Q50.500 10 53 10H63Q69.500 10 69.500 16V49Q69.500 55 63 55H9Q2.500 55 2.500 49V16Q2.500 10 9 10Z"/><circle cx="36" cy="31.500" r="14"/><circle cx="57" cy="21" r="3" fill="#fff" stroke="none"/></svg>
      <svg class="mic" width="50" height="70" viewBox="0 0 50 70" fill="none" stroke="#fff" stroke-width="4.200" stroke-linecap="round"><rect x="13.500" y="2.500" width="23" height="45" rx="11.500"/><path d="M3 35.500V36A22 22 0 0 0 47 36V35.500M25 58.500V68"/></svg>
    </div>
    <div class="home-bar"></div>
  </footer>
</div>

<svg class="defs" width="0" height="0">
  <defs>
    <linearGradient id="blue" x2="0" y2="1"><stop offset="0" stop-color="#7cc0ff"/><stop offset=".2" stop-color="#2e8cf5"/><stop offset="1" stop-color="#005ae2"/></linearGradient>
    <linearGradient id="leather" x2="0" y2="1"><stop offset="0" stop-color="#866653"/><stop offset="1" stop-color="#49322a"/></linearGradient>
    <linearGradient id="flap" x2="0" y2="1"><stop offset="0" stop-color="#9b7b66"/><stop offset="1" stop-color="#614435"/></linearGradient>
    <linearGradient id="fold"><stop offset="0" stop-color="#d7d7d7"/><stop offset=".35" stop-color="#727272"/><stop offset="1" stop-color="#ddd"/></linearGradient>
    <linearGradient id="metal"><stop offset="0" stop-color="#42678b"/><stop offset=".5" stop-color="#d5dde4"/><stop offset="1" stop-color="#526b82"/></linearGradient>
    <radialGradient id="siren" cx=".4" cy=".5" r=".7"><stop offset="0" stop-color="#ff6759"/><stop offset=".6" stop-color="#ee3022"/><stop offset="1" stop-color="#b82019"/></radialGradient>
    <linearGradient id="flag-yellow" x2="0" y2="1"><stop offset="0" stop-color="#b66e18"/><stop offset=".2" stop-color="#eaa02b"/><stop offset="1" stop-color="#e6942a"/></linearGradient>
    <g id="flag">
      <path d="M33 46Q65 56 105 44Q165 32 204 43V154Q170 148 120 158Q70 168 33 157Z" fill="url(#flag-yellow)"/>
      <path d="M204 43V154Q170 148 120 158Q70 167 36 157Q120 130 176 39Q190 40 204 43Z" fill="#e4452f"/>
      <path d="M62 147L84 135L97 124L103 108L124 98L132 90L130 80L120 78Q126 60 146 58H164L172 68L170 80L158 84L148 78L141 80L150 91L145 106L160 115L161 124L150 124L131 112L110 118L103 135L106 154L97 156L93 142L65 153Z" fill="#f5eee8" stroke="#8b6b50" stroke-width="2"/>
      <circle cx="158" cy="71" r="5" fill="#a24835"/><circle cx="112" cy="123" r="4" fill="#f5eee8"/>
    </g>
  </defs>
</svg>
</body>
</html>
```
FILE: styles.css
```css
* { box-sizing: border-box; }
body { margin: 0; background: #0f0f0f; font-family: Inter, "Liberation Sans", sans-serif; color: #fafbfb; }
svg { display: block; flex: none; }
.screen { width: 1290px; height: 2796px; display: flex; flex-direction: column; overflow: hidden; }
.defs { position: absolute; }

.header { height: 292px; flex: none; background: linear-gradient(90deg, #131414, #151717 30%, #141515 65%, #111111); padding-top: 35px; }
.status { height: 137px; display: flex; justify-content: space-between; }
.status-left { padding-left: 37px; }
.clock { margin-left: 148px; font-size: 54px; line-height: 60px; font-weight: 700; letter-spacing: 2px; color: #fff; -webkit-text-stroke: .6px; }
.return-app { display: flex; align-items: center; gap: 12px; margin-top: 8px; font-size: 32px; line-height: 40px; font-weight: 600; letter-spacing: 1.3px; color: #fff; }
.status-right { display: flex; align-items: center; height: 103px; padding-right: 113px; }
.network { font-size: 43px; line-height: 50px; font-weight: 600; margin: 4px 0 0 21px; color: #fff; width: 82px; letter-spacing: 1px; }
.battery { width: 85px; height: 45px; border-radius: 14px; background: linear-gradient(90deg, #fff 59px, #8a8b8b 59px); display: flex; align-items: center; justify-content: center; }
.battery-level { font-size: 42px; line-height: 45px; font-weight: 800; color: #111; letter-spacing: -.2px; }
.battery-cap { margin-left: 3px; }

.contact { height: 108px; display: flex; align-items: center; padding-left: 37px; }
.avatar { margin-left: 101px; }
.contact-text { margin-left: 31px; }
.contact-name { font-size: 47px; line-height: 56px; font-weight: 700; letter-spacing: 1.2px; -webkit-text-stroke: .7px; }
.contact-kind { font-size: 34px; line-height: 40px; font-weight: 500; color: #898a8a; letter-spacing: 1.4px; -webkit-text-stroke: .5px; }

.chat { position: relative; height: 2263px; flex: none; background: #090909; display: flex; flex-direction: column; align-items: flex-start; }
.wallpaper { position: absolute; left: 0; top: 0; }
.doodles { fill: none; stroke: #202020; stroke-width: 2.3px; stroke-linecap: round; stroke-linejoin: round; }
.wallpaper path, .wallpaper ellipse, .wallpaper circle { vector-effect: non-scaling-stroke; }
.digits-outer { stroke-width: 8px; }
.digits-inner { stroke-width: 4px; stroke: #090909; }

.bubble { position: relative; font-size: 56px; line-height: 72px; font-weight: 500; letter-spacing: -.1px; -webkit-text-stroke: .9px; }
.bubble i { display: inline-block; width: 4px; }
.earlier { width: 960px; height: 13.5px; margin-left: 50px; background: #242625; border-radius: 0 0 32px 20px / 0 0 13px 10px; }
.tail-left { position: absolute; left: -18px; bottom: 0; }

.sent { width: 467px; height: 112px; margin: 40.500px 0 0 773px; padding: 0 27px 0 29px; background: #144d37; border-radius: 36px; display: flex; justify-content: space-between; }
.sent-text { line-height: 102px; letter-spacing: -.4px; color: #fff; }
.sent-meta { display: flex; gap: 8px; padding-top: 51px; font-size: 40px; letter-spacing: 2.4px; color: #86a998; -webkit-text-stroke: .5px; }
.sent-meta svg { margin-top: 4px; }
.sent-time { line-height: 49px; }
.tail-right { position: absolute; right: -18px; bottom: 0; }

.received { width: 977px; height: 2032px; margin: 41px 0 0 50px; padding: 15px 0 0 28px; background: #242625; border-radius: 36px; }
.received p { margin: 0; white-space: pre; }
.received .gap { margin-top: 72px; }
.received .bold, .received b { font-weight: 700; }
.t-tight { letter-spacing: -.26px; }
.t-tighter { letter-spacing: -.46px; }
.t-title { letter-spacing: .42px; }
.t-druk { letter-spacing: .8px; }
.t-help { letter-spacing: .53px; }
.t-just { letter-spacing: .8px; }
ul { margin: 12px 0; padding: 0; list-style: none; }
.received ul + .gap { margin-top: 84px; }
li { position: relative; padding-left: 59px; white-space: pre; }
li::before { content: ""; position: absolute; left: 13px; top: 28px; width: 18px; height: 18px; border-radius: 50%; background: #fafbfb; }
.emoji { display: inline-block; width: 72px; height: 72px; margin: -4px 0; vertical-align: -12px; }
.flag { vertical-align: -15px; }
li .emoji { margin-left: 14px; }
.last-line { display: flex; justify-content: space-between; padding-right: 27px; }
.received-time { font-size: 40px; line-height: 48px; letter-spacing: 2.4px; color: #8c8e8d; padding-top: 37px; -webkit-text-stroke: .5px; }

.composer { height: 241px; flex: none; background: #0f0f0f; padding-top: 22px; }
.composer-row { height: 96px; display: flex; align-items: center; padding-left: 40px; }
.input { width: 867px; height: 96px; margin-left: 39px; border-radius: 48px; background: #272727; border: 2px solid #393939; display: flex; align-items: center; justify-content: flex-end; padding-right: 31px; }
.camera { margin-left: 55px; }
.mic { margin-left: 55px; margin-top: -6px; }
.home-bar { width: 462px; height: 15px; margin: 84px auto 0; border-radius: 8px; background: #fff; }
```
